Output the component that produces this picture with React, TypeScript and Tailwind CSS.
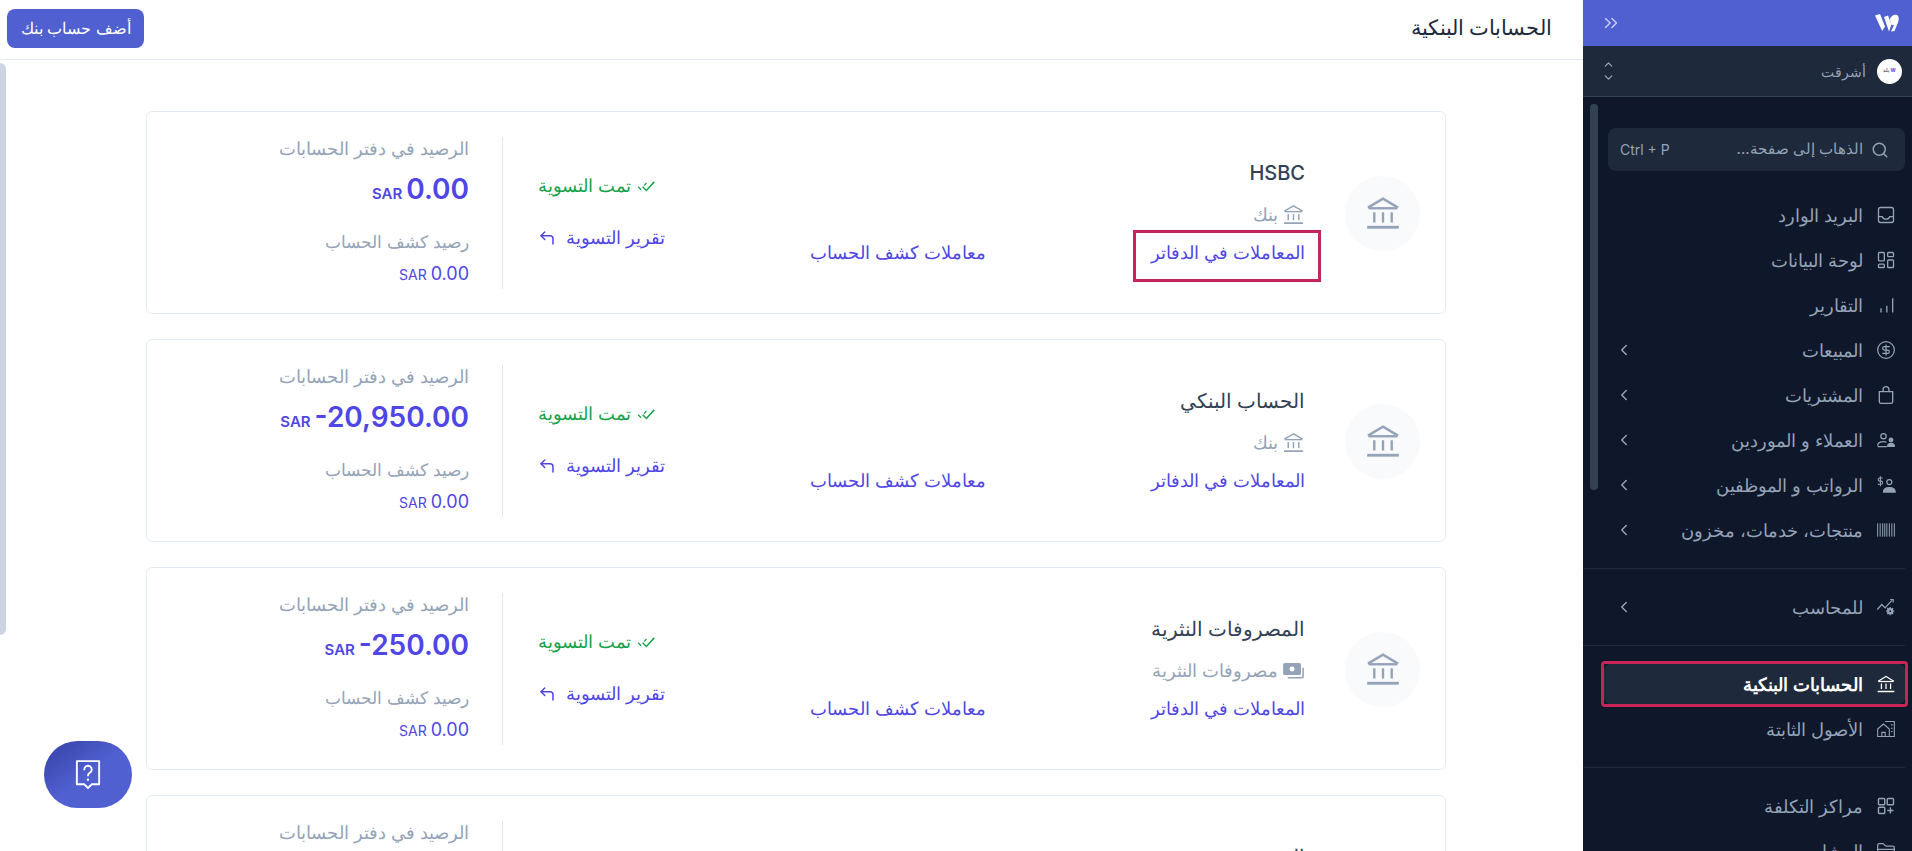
import type { ReactNode } from "react"
import { ChevronLeft, ChevronsRight, ChevronUp, ChevronDown, Search, CornerUpLeft, CircleDollarSign, FolderClosed } from "lucide-react"

function BankIcon({ className }: { className?: string }) {
    return <svg viewBox="0 0 24 24" className={className} fill="none" stroke="currentColor" strokeWidth="1.5">
        <path d="M2.5 8.6 12 3l9.5 5.6" />
        <path d="M3 9h18" />
        <path d="M6.5 11.5v6.5M12 11.5v6.5M17.5 11.5v6.5" />
        <path d="M2 21h20" strokeWidth="1.8" />
    </svg>
}

function MoneyIcon({ className }: { className?: string }) {
    return <svg viewBox="0 0 24 24" className={className} fill="none" stroke="currentColor" strokeWidth="1.6">
        <rect x="2" y="5" width="17" height="11" rx="1" fill="currentColor" />
        <circle cx="10.5" cy="10.5" r="2.6" fill="#fff" stroke="none" />
        <path d="M22 9v9.5a1 1 0 0 1-1 1H6" />
    </svg>
}

function InboxIcon({ className }: { className?: string }) {
    return <svg viewBox="0 0 24 24" className={className} fill="none" stroke="currentColor" strokeWidth="1.6">
        <rect x="3" y="3" width="18" height="18" rx="2.5" />
        <path d="M3 14h4.500c.8 2 2.500 3 4.500 3s3.700-1 4.500-3H21" />
    </svg>
}

function GridIcon({ className }: { className?: string }) {
    return <svg viewBox="0 0 24 24" className={className} fill="none" stroke="currentColor" strokeWidth="1.6">
        <rect x="3" y="3" width="7" height="10" rx="1" />
        <rect x="14" y="3" width="7" height="5" rx="1" />
        <rect x="14" y="12" width="7" height="9" rx="1" />
        <rect x="3" y="17" width="7" height="4" rx="1" />
    </svg>
}

function ReportsIcon({ className }: { className?: string }) {
    return <svg viewBox="0 0 24 24" className={className} fill="none" stroke="currentColor" strokeWidth="1.600">
        <path d="M6 21v-5M13 21v-8M20 21V4" />
    </svg>
}

function BagIcon({ className }: { className?: string }) {
    return <svg viewBox="0 0 24 24" className={className} fill="none" stroke="currentColor" strokeWidth="1.600">
        <path d="M4 8h16v12a2 2 0 0 1-2 2H6a2 2 0 0 1-2-2z" />
        <path d="M8.500 8V5.500a3.500 3.500 0 0 1 7 0V8" />
    </svg>
}

function UsersIcon({ className }: { className?: string }) {
    return <svg viewBox="0 0 24 24" className={className} fill="none" stroke="currentColor" strokeWidth="1.5">
        <circle cx="9" cy="7.5" r="3.2" />
        <path d="M2 19c0-3 3-5 7-5 1.5 0 2.6.2 3.6.7" />
        <path d="M2 20h11" />
        <circle cx="18" cy="12" r="2.2" fill="currentColor" />
        <path d="M14 19.5c0-2.2 2-3.5 4-3.5s4 1.300 4 3.500z" fill="currentColor" />
    </svg>
}

function PayrollIcon({ className }: { className?: string }) {
    return <svg viewBox="0 0 24 24" className={className} fill="none" stroke="currentColor" strokeWidth="1.5">
        <circle cx="16" cy="8.500" r="3" />
        <path d="M9 20.500c0-3.500 3-5.500 7-5.500s7 2 7 5.500z" fill="currentColor" />
        <path d="M8 3.500H4.500a1.700 1.700 0 0 0 0 3.800h1.500a1.700 1.700 0 0 1 0 3.800H2M5.300 1.500v12" strokeWidth="1.300" />
    </svg>
}

function BarcodeIcon({ className }: { className?: string }) {
    return <svg viewBox="0 0 24 24" className={className} fill="none" stroke="currentColor" strokeWidth="1.200">
        <path d="M2 4v16M5 4v16M8 4v16M10.500 4v16M13 4v16M16 4v16M19 4v16M22 4v16" />
    </svg>
}

function AccountantIcon({ className }: { className?: string }) {
    return <svg viewBox="0 0 24 24" className={className} fill="none" stroke="currentColor" strokeWidth="1.500">
        <path d="M1.500 15 7 9l4 4 8-9" />
        <path d="m17 3 3.500.2.200 3.300" />
        <circle cx="17" cy="17" r="3" fill="currentColor" />
        <path d="M17 12v10M12 17h10M13.500 13.500l7 7M20.500 13.500l-7 7" strokeWidth="1.600" />
        <circle cx="17" cy="17" r="1.100" fill="#0f172a" stroke="none" />
    </svg>
}

function AssetsIcon({ className }: { className?: string }) {
    return <svg viewBox="0 0 24 24" className={className} fill="none" stroke="currentColor" strokeWidth="1.300">
        <path d="M2 12 9 6l7 6v9H2z" />
        <path d="M7 21v-5h4v5" />
        <path d="M11 3h11v18h-6" />
        <path d="M18 7h2M18 11h2M18 15h2" />
    </svg>
}

function CostIcon({ className }: { className?: string }) {
    return <svg viewBox="0 0 24 24" className={className} fill="none" stroke="currentColor" strokeWidth="1.700">
        <rect x="3" y="3" width="7.500" height="7.500" rx="1" />
        <rect x="13.500" y="3" width="7.500" height="7.500" rx="1" />
        <rect x="3" y="13.500" width="7.500" height="7.500" rx="1" />
        <path d="M17.300 13.500V21M13.500 17.300H21" />
    </svg>
}

function DoneIcon({ className }: { className?: string }) {
    return <svg viewBox="0 0 24 24" className={className} fill="none" stroke="currentColor" strokeWidth="2">
        <path d="m7.500 13 5 5L23 6.500" />
        <path d="m1.500 13 4 4M9.500 11.500l3-3.500" strokeWidth="1.700" />
    </svg>
}

function Logo() {
    return <svg viewBox="0 0 24 18" className="w-[24px] h-[18px]" fill="#fff">
        <path d="M0 1.500 5 0l5 12.500-2.800 4.500z" />
        <path d="M9 3l4-1.500 3.500 9-2.500 7z" />
        <path d="M15 4.500c1.500-3.500 5-4.500 7-3.500 2 1.200 2.200 4.500 1 7.500L19.500 17l-3.500.500 3-6.500c-2 .500-4-1-4-6.500z" />
    </svg>
}

function HelpIcon() {
    return <svg viewBox="0 0 28 34" className="w-[26px] h-[32px]" fill="none" stroke="#fff" strokeWidth="2" strokeLinejoin="round">
        <path d="M2 2h24v25h-8l-4 4-4-4H2z" />
        <path d="M10 11a4 4 0 1 1 6 3.500c-1.300.800-2 1.500-2 3" strokeLinecap="round" />
        <circle cx="14" cy="22" r="1.300" fill="#fff" stroke="none" />
    </svg>
}

function NavItem({ icon, label, arrow, active }: { icon: ReactNode, label: string, arrow?: boolean, active?: boolean }) {
    return <div className={"flex items-center h-[40px] mb-[5px] pr-[9px] pl-[11px] rounded-md " + (active ? "bg-[#1e293b] text-white font-semibold" : "text-[#94a3b8] font-medium")}>
        <span className="w-[21px] h-[21px] flex items-center justify-center shrink-0">{icon}</span>
        <span className="mr-[12px] text-[18px] flex-1">{label}</span>
        {arrow && <ChevronLeft className="w-[18px] h-[18px] text-[#94a3b8]" />}
    </div>
}

function Sidebar() {
    const ic = "w-[20px] h-[20px]"
    return <aside className="w-[329px] shrink-0 h-full bg-[#0f172a] relative overflow-hidden flex flex-col">
        <div className="h-[46px] bg-[#5060d0] flex items-center justify-between pr-[13px] pl-[17px] shrink-0">
            <Logo />
            <ChevronsRight className="w-[22px] h-[22px] text-[#c7cdf5]" strokeWidth={1.6} />
        </div>
        <div className="h-[51px] bg-[#1e293b] border-b border-[#334155] flex items-center pr-[10px] pl-[19px] shrink-0">
            <span className="w-[25px] h-[25px] rounded-full bg-white flex items-center justify-center gap-[1px] text-[5px] font-bold">
                <span className="text-[#4f46e5]">W</span>
                <span className="text-[#475569]">بلد</span>
            </span>
            <span className="mr-[11px] text-[14px] text-[#94a3b8] flex-1">أشرقت</span>
            <span className="flex flex-col text-[#94a3b8]">
                <ChevronUp className="w-[13px] h-[13px]" strokeWidth={2.4} />
                <ChevronDown className="w-[13px] h-[13px]" strokeWidth={2.4} />
            </span>
        </div>
        <div className="absolute left-[7px] top-[104px] w-[8px] h-[386px] rounded-full bg-[#334155]"></div>
        <nav className="mr-[7px] ml-[21px] pt-[31px]">
            <div className="h-[43px] ml-[4px] bg-[#1e293b] rounded-lg flex items-center pr-[16px] pl-[12px] mb-[24px] text-[#94a3b8]">
                <Search className="w-[18px] h-[18px]" />
                <span className="mr-[8px] flex-1 text-[15px]">الذهاب إلى صفحة...</span>
                <span className="text-[14px]" dir="ltr">Ctrl + P</span>
            </div>
            <NavItem icon={<InboxIcon className={ic} />} label="البريد الوارد" />
            <NavItem icon={<GridIcon className={ic} />} label="لوحة البيانات" />
            <NavItem icon={<ReportsIcon className={ic} />} label="التقارير" />
            <NavItem icon={<CircleDollarSign className={ic} strokeWidth={1.5} />} label="المبيعات" arrow />
            <NavItem icon={<BagIcon className={ic} />} label="المشتريات" arrow />
            <NavItem icon={<UsersIcon className={ic} />} label="العملاء و الموردين" arrow />
            <NavItem icon={<PayrollIcon className={ic} />} label="الرواتب و الموظفين" arrow />
            <NavItem icon={<BarcodeIcon className={ic} />} label="منتجات، خدمات، مخزون" arrow />
            <div className="border-t border-[#1e293b] mt-[18px] mb-[18px] ml-[-21px]"></div>
            <NavItem icon={<AccountantIcon className={ic} />} label="للمحاسب" arrow />
            <div className="border-t border-[#1e293b] mt-[18px] mb-[18px] ml-[-21px]"></div>
            <div className="outline-3 outline-[#c7245a] mb-[5px] rounded-[1px]">
                <div className="[&>div]:mb-0">
                    <NavItem icon={<BankIcon className={ic + " text-white"} />} label="الحسابات البنكية" active />
                </div>
            </div>
            <NavItem icon={<AssetsIcon className={ic} />} label="الأصول الثابتة" />
            <div className="border-t border-[#1e293b] mt-[18px] mb-[18px] ml-[-21px]"></div>
            <NavItem icon={<CostIcon className={ic} />} label="مراكز التكلفة" />
            <NavItem icon={<FolderClosed className={ic} strokeWidth={1.5} />} label="المشاريع" />
        </nav>
    </aside>
}

function BankCard({ name, type, money, amount, highlight }: { name: string, type: string, money?: boolean, amount: string, highlight?: boolean }) {
    return <div className="h-[203px] shrink-0 border border-[#e2ecf5] rounded-md bg-white flex pt-[25px] pb-[24px] pr-[25px]">
        <div className="flex items-center shrink-0">
            <div className="w-[75px] h-[75px] rounded-full bg-[#f8fafc] flex items-center justify-center text-[#94a3b8]">
                <BankIcon className="w-[38px] h-[38px]" />
            </div>
        </div>
        <div className="flex-1 mr-[40px] pt-[22px]">
            <div className="text-[20px] leading-[28px] font-medium text-[#334155]">{name}</div>
            <div className="mt-[14px] h-[26px] flex items-center gap-[4px] text-[18px] text-[#94a3b8]">
                {money ? <MoneyIcon className="w-[23px] h-[23px]" /> : <BankIcon className="w-[23px] h-[23px]" />}
                <span>{type}</span>
            </div>
            <div className="mt-[14px] flex text-[17.5px] leading-[24px] text-[#4f46e5]">
                <span className="w-[319px] relative">
                    المعاملات في الدفاتر
                    {highlight && <span className="absolute right-[-16px] top-[-11px] w-[188px] h-[52px] border-3 border-[#c7245a]"></span>}
                </span>
                <span>معاملات كشف الحساب</span>
            </div>
        </div>
        <div className="w-[162px] shrink-0 flex flex-col justify-center gap-[28px] text-[18px] leading-[24px] pb-[2px]">
            <div className="flex items-center gap-[6px] text-[#16a34a] mr-[10px]">
                <DoneIcon className="w-[18px] h-[18px]" />
                <span>تمت التسوية</span>
            </div>
            <div className="flex items-center gap-[10px] text-[#4f46e5]">
                <span>تقرير التسوية</span>
                <CornerUpLeft className="w-[18px] h-[18px]" strokeWidth={2} />
            </div>
        </div>
        <div className="w-[356px] shrink-0 border-r border-[#e2e8f0] pr-[33px]">
            <div className="text-[17.5px] leading-[24px] text-[#94a3b8]">الرصيد في دفتر الحسابات</div>
            <div className="mt-[10px] flex items-baseline gap-[4px] text-[#4f46e5] font-semibold">
                <span className="text-[28px] leading-[36px]" dir="ltr">{amount}</span>
                <span className="text-[15px]">SAR</span>
            </div>
            <div className="mt-[23px] text-[17px] leading-[24px] text-[#94a3b8]">رصيد كشف الحساب</div>
            <div className="mt-[8px] flex items-baseline gap-[4px] text-[#4f46e5] text-[18px] leading-[24px]">
                <span dir="ltr">0.00</span>
                <span className="text-[14px]">SAR</span>
            </div>
        </div>
    </div>
}

export default function App() {
    return <div dir="rtl" className="h-[851px] w-full flex overflow-hidden bg-white font-['Inter','Noto_Sans',sans-serif]">
        <Sidebar />
        <main className="flex-1 h-full relative overflow-hidden flex flex-col">
            <header className="h-[60px] shrink-0 border-b border-[#e2e8f0] flex items-center justify-between pr-[31px] pl-[7px] pb-[3px]">
                <h1 className="text-[20.500px] font-medium text-[#1e293b]">الحسابات البنكية</h1>
                <button className="w-[137px] h-[39px] rounded-lg bg-[#5060d0] text-white text-[16px]">أضف حساب بنك</button>
            </header>
            <div className="flex flex-col gap-[25px] pt-[51px] pr-[137px] pl-[146px]">
                <BankCard name="HSBC" type="بنك" amount="0.00" highlight />
                <BankCard name="الحساب البنكي" type="بنك" amount="-20,950.00" />
                <BankCard name="المصروفات النثرية" type="مصروفات النثرية" money amount="-250.00" />
                <BankCard name="النقدية" type="بنك" amount="0.00" />
            </div>
            <div className="absolute left-0 top-[63px] w-[6px] h-[572px] rounded-r-md bg-[#cbd5e1]"></div>
            <button className="absolute left-[44px] top-[741px] w-[88px] h-[67px] rounded-full bg-gradient-to-br from-[#3540a5] via-[#5060d0] to-[#5060d0] flex items-center justify-center">
                <HelpIcon />
            </button>
        </main>
    </div>
}
